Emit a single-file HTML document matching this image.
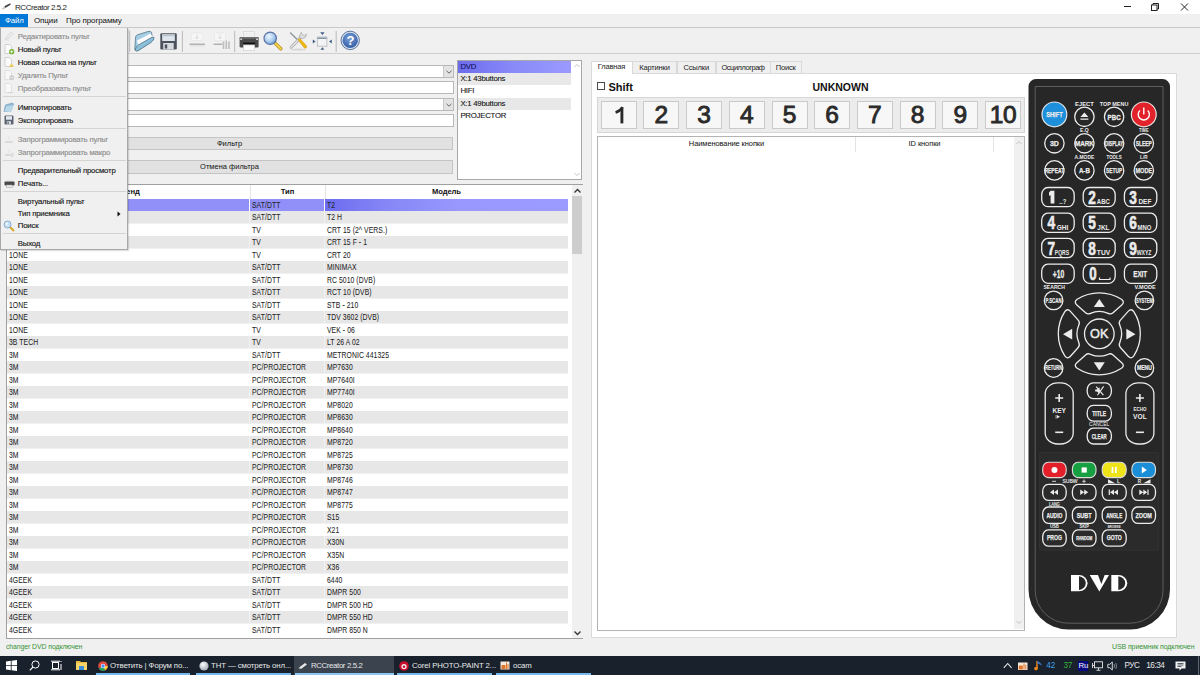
<!DOCTYPE html>
<html><head><meta charset="utf-8">
<style>
*{margin:0;padding:0;box-sizing:border-box}
html,body{width:1200px;height:675px;overflow:hidden}
body{white-space:nowrap;background:#f0f0f0;font-family:"Liberation Sans",sans-serif;position:relative;font-size:7.5px;color:#000}
.a{position:absolute}
i{font-style:normal}
/* title */
#title{left:0;top:0;width:1200px;height:14px;background:#fff}
#title .t{left:15px;top:2.6px;font-size:8px;color:#222;letter-spacing:-0.45px}
#menubar{left:0;top:14px;width:1200px;height:13.8px;background:#f0f0f0;border-bottom:1px solid #c9c9c9}
#menubar .m{top:2.1px;font-size:8px;color:#111;letter-spacing:-0.1px}
#filehl{left:0;top:14px;width:28px;height:13px;background:#0078d7}
#toolbar{left:0;top:27px;width:1200px;height:27px;border-bottom:1px solid #cfcfcf}
/* form */
.inp{background:#fff;border:1px solid #b9b9b9}
.btn{background:#e1e1e1;border:1px solid #c4c4c4;text-align:center;font-size:7.5px;color:#111;line-height:12.5px}
.ddb{background:#e3e3e3;border-left:1px solid #c8c8c8}
/* list */
#list{left:457px;top:60px;width:125px;height:120px;background:#fff;border:1px solid #a8a8a8}
#list .li{left:0;width:113px;height:12.2px;font-size:7.8px;padding-left:2.4px;line-height:12px;color:#111;letter-spacing:-0.25px;-webkit-text-stroke:0.1px #111}
/* table */
#table{left:6px;top:183.5px;width:577px;height:455px;background:#fff;border:1px solid #a0a0a0}
.row{position:absolute;left:7px;width:561px;height:12.5px;font-size:8.5px;color:#222;letter-spacing:0.1px}
.row i{position:absolute;top:0;height:12px;line-height:10px;padding-top:1.0px;padding-left:1.9px;white-space:nowrap}
.row b{display:inline-block;font-weight:normal;transform:scaleX(.8);transform-origin:0 50%;-webkit-text-stroke:0.05px #222}
.row .c1{left:0;width:242px}
.row .c2{left:243px;width:74px}
.row .c3{left:318px;width:243px}
.row.g{background:#f1f1f1}.row.g i{background:#e7e7e7}
.row.sel i{background:#9090f8}
.row.sel .c3{background:linear-gradient(90deg,#6c6cf0,#8686f6 25%,#9898fe 55%,#9a9aff)}
.hdr{top:0;height:14px;line-height:14px;font-weight:bold;font-size:7.6px;text-align:center;color:#111;letter-spacing:-0.1px}
/* tabs */
.tab{top:61px;height:12px;border:1px solid #d9d9d9;border-bottom:none;background:#f0f0f0;font-size:7.5px;line-height:12px;text-align:center;color:#222;letter-spacing:-0.15px}
#tabpage{left:590.5px;top:72.5px;width:586px;height:565px;background:#fff;border:1px solid #dadada}
.nb{top:100.5px;width:36px;height:28px;background:#f7f7f7;border:1.5px solid #cacaca;font-size:24.5px;line-height:25.8px;text-align:center;color:#2a2a2a;-webkit-text-stroke:0.9px #2a2a2a}
/* status + taskbar */
#status1{left:5.8px;top:642px;font-size:7.5px;color:#379437;letter-spacing:-0.1px;transform:scaleX(.92);transform-origin:0 0}
#status2{left:1112px;top:642px;font-size:7.5px;color:#379437;letter-spacing:-0.1px;transform:scaleX(.93);transform-origin:0 0}
#taskbar{left:0;top:656px;width:1200px;height:19px;background:#18212c}
.task{top:0;height:19px;color:#e8e8e8;font-size:7.8px;line-height:19px;letter-spacing:-0.1px}
.uline{top:17px;height:2px;background:#78b8ec}
</style></head><body>

<!-- title bar -->
<div id="title" class="a">
  <svg class="a" style="left:0;top:0" width="14" height="14" viewBox="0 0 14 14"><path d="M4.2 6.2 L9.6 3.6 Q11.2 3.4 10.6 4.8 L5.4 8 Z" fill="#4a4a4a"/><path d="M4.2 6.2 L5.4 8 L3.2 9.6 Q1.8 9.8 2.2 8.6Z" fill="#c4c4c4"/></svg>
  <div class="a t">RCCreator 2.5.2</div>
  <div class="a" style="left:1124px;top:6px;width:7px;height:1px;background:#222"></div>
  <svg class="a" style="left:1151px;top:3px" width="9" height="8" viewBox="0 0 9 8"><rect x="0.5" y="2" width="5.5" height="5.5" fill="none" stroke="#222" stroke-width="1"/><path d="M2 2 V0.5 H7.5 V6 H6" fill="none" stroke="#222" stroke-width="1"/></svg>
  <svg class="a" style="left:1180px;top:2.5px" width="9" height="8" viewBox="0 0 9 8"><path d="M1 0.5 L8 7.5 M8 0.5 L1 7.5" stroke="#222" stroke-width="1"/></svg>
</div>

<!-- menubar -->
<div id="menubar" class="a">
  <div class="a m" style="left:34px">Опции</div>
  <div class="a m" style="left:66px">Про программу</div>
</div>
<div id="filehl" class="a"><div class="a" style="left:5px;top:2.1px;font-size:7.8px;color:#fff;letter-spacing:-0.1px">Файл</div></div>

<!-- toolbar -->
<div id="toolbar" class="a"><svg class="a" style="left:0;top:0" width="400" height="27" viewBox="0 27 400 27">
<defs>
<linearGradient id="fold" x1="0" y1="0" x2="1" y2="1"><stop offset="0" stop-color="#a9d5ea"/><stop offset="1" stop-color="#6fa9c8"/></linearGradient>
<radialGradient id="lens" cx="0.4" cy="0.35" r="0.7"><stop offset="0" stop-color="#eef6fd"/><stop offset="0.6" stop-color="#a9cdf0"/><stop offset="1" stop-color="#5d92d0"/></radialGradient>
<radialGradient id="help" cx="0.45" cy="0.35" r="0.7"><stop offset="0" stop-color="#7a9fd8"/><stop offset="1" stop-color="#2f5aa3"/></radialGradient>
</defs>
<path d="M129.7 31 V52" stroke="#b9b9b9" stroke-width="1"/>
<path d="M182.4 31 V52" stroke="#b9b9b9" stroke-width="1"/>
<path d="M234.7 31 V52" stroke="#b9b9b9" stroke-width="1"/>
<path d="M336.2 31 V52" stroke="#b9b9b9" stroke-width="1"/>
<!-- folder -->
<path d="M134.8 49.6 L135.6 37 Q135.9 35.3 137.5 34.8 L148 31.5 Q151 30.8 151.6 32.5 L152 36 Z" fill="#a3cde2" stroke="#56778c" stroke-width="0.8"/>
<path d="M137 40.5 L150.6 33.6 L152.6 37 L138.3 45.4 Z" fill="#fdfdfd"/>
<path d="M135.3 50.4 Q135 49 136.5 47 L138 45.3 Q138.8 44.6 140.2 44 L152 37.2 Q154.6 36.5 154 38.8 L152.5 41 Q151.2 42.6 149.5 43.4 L139 50.2 Q136 52 135.3 50.4Z" fill="url(#fold)" stroke="#4c6f85" stroke-width="0.8"/>
<!-- floppy -->
<rect x="160.3" y="33.2" width="16.5" height="16.2" rx="1.2" fill="#4c535c"/>
<rect x="162.2" y="34.2" width="12.6" height="6.8" fill="#dfe6ee"/>
<rect x="162.2" y="34.2" width="12.6" height="2" fill="#b9c2cc"/>
<rect x="163.2" y="43" width="10.5" height="6.4" fill="#d7dbe0"/>
<rect x="164.8" y="44.5" width="2.4" height="4" fill="#4c535c"/>
<!-- disabled 1 -->
<rect x="191.5" y="33" width="11" height="7.5" rx="1" fill="#f6f6f6" stroke="#e6e6e6" stroke-width="0.7"/>
<path d="M197 34.5 V38.5 M195.5 37 L197 38.7 L198.5 37" fill="none" stroke="#cfcfcf" stroke-width="0.7"/>
<path d="M189.5 44.2 H205" stroke="#9b9b9b" stroke-width="1.1"/>
<path d="M190 46 H204.5" stroke="#e4e4e4" stroke-width="1.5"/>
<!-- disabled 2 -->
<rect x="214.5" y="33" width="11" height="7.5" rx="1" fill="#f6f6f6" stroke="#e6e6e6" stroke-width="0.7"/>
<path d="M220 34.5 V38.5 M218.5 37 L220 38.7 L221.5 37" fill="none" stroke="#cfcfcf" stroke-width="0.7"/>
<path d="M213.6 44.2 H222.5" stroke="#9b9b9b" stroke-width="1.1"/>
<path d="M223.5 41.5 V49 M226.3 40.5 V49 M229 41.5 V49" stroke="#bdbdbd" stroke-width="1.6"/>
<!-- printer -->
<rect x="243.6" y="31.4" width="11" height="6.5" fill="#f6f6f6" stroke="#cfcfcf" stroke-width="0.6"/>
<path d="M244.5 33.5 H253.5 M244.5 35.5 H253.5" stroke="#dcdcdc" stroke-width="0.5"/>
<rect x="239.6" y="37.2" width="19" height="10.2" rx="1.2" fill="#4a4a4a"/>
<rect x="239.6" y="37.2" width="19" height="1.6" fill="#6e6e6e"/>
<rect x="240.2" y="38.6" width="2" height="1.4" fill="#cfcfcf"/>
<rect x="256" y="38.6" width="2" height="1.4" fill="#cfcfcf"/>
<rect x="243" y="42.6" width="12.2" height="1.4" fill="#0e0e0e"/>
<rect x="243.6" y="45" width="11" height="5.4" fill="#fbfbfb" stroke="#cacaca" stroke-width="0.6"/>
<!-- magnifier -->
<path d="M275.6 43.6 L280.8 48.8" stroke="#b08a1a" stroke-width="3.4" stroke-linecap="round"/>
<path d="M275.6 43.6 L280.8 48.8" stroke="#f3d34a" stroke-width="2" stroke-linecap="round"/>
<circle cx="270.2" cy="38.3" r="6.2" fill="url(#lens)" stroke="#5d72a0" stroke-width="1.2"/>
<!-- tools -->
<ellipse cx="298.5" cy="49.6" rx="8" ry="1" fill="#d6d6d6"/>
<path d="M290.6 33 L298.5 40.8" stroke="#8f9aa0" stroke-width="1.5" stroke-linecap="round"/>
<path d="M291.2 47.2 L300.8 37.4" stroke="#a9a9a9" stroke-width="3" stroke-linecap="round"/>
<path d="M291.2 47.2 L300.8 37.4" stroke="#e2e2e2" stroke-width="1.6" stroke-linecap="round"/>
<path d="M300.2 38.2 Q298.6 34.2 301.4 32.2 L302.2 34.6 L304.6 35.6 L306.4 34 Q306.6 37.8 303 38.6 Z" fill="#dedede" stroke="#a2a2a2" stroke-width="0.6"/>
<path d="M298 39.8 L299.8 38.6 L306.6 46 Q306.8 48.4 304.6 48.2 Z" fill="#f0b90f" stroke="#c98f00" stroke-width="0.5"/>
<!-- fit -->
<rect x="317.3" y="37" width="9.6" height="9.2" fill="#f3f3f3" stroke="#b4b8be" stroke-width="0.8"/>
<rect x="317.6" y="37.6" width="9" height="1.2" fill="#6c7f99"/>
<path d="M320.2 32.2 H324.6 L322.4 35Z M320.4 49.8 H324.4 L322.4 47.2Z M312.8 39.4 V43.6 L315.6 41.5Z M331.8 39.4 V43.6 L329 41.5Z" fill="#435f87"/>
<!-- help -->
<circle cx="350.2" cy="40.4" r="9.2" fill="#d8e3f0" stroke="#4e6890" stroke-width="0.9"/>
<circle cx="350.2" cy="40.4" r="7.7" fill="url(#help)"/>
<text x="350.4" y="45.2" font-family="Liberation Sans" font-weight="bold" font-size="13" fill="#fff" text-anchor="middle">?</text>
</svg>
</div>

<!-- left form -->
<div class="a inp" style="left:60px;top:65px;width:394px;height:13px"><div class="a ddb" style="right:0;top:0;width:10px;height:11px"><svg class="a" style="left:2px;top:3.5px" width="6" height="4" viewBox="0 0 6 4"><path d="M0.5 0.8 L3 3.2 L5.5 0.8" fill="none" stroke="#555" stroke-width="0.9"/></svg></div></div>
<div class="a inp" style="left:60px;top:81px;width:394px;height:13px"></div>
<div class="a inp" style="left:60px;top:98px;width:394px;height:13px"><div class="a ddb" style="right:0;top:0;width:10px;height:11px"><svg class="a" style="left:2px;top:3.5px" width="6" height="4" viewBox="0 0 6 4"><path d="M0.5 0.8 L3 3.2 L5.5 0.8" fill="none" stroke="#555" stroke-width="0.9"/></svg></div></div>
<div class="a inp" style="left:60px;top:114px;width:394px;height:13px"></div>
<div class="a btn" style="left:6px;top:136.5px;width:447px;height:13px">Фильтр</div>
<div class="a btn" style="left:6px;top:160px;width:447px;height:13.5px">Отмена фильтра</div>

<!-- list -->
<div id="list" class="a">
  <div class="a li" style="top:0;background:linear-gradient(90deg,#6c6cee,#8a8af8 50%,#9a9aff);color:#101060">DVD</div>
  <div class="a li" style="top:12.2px;background:#e8e8e8">X:1 43buttons</div>
  <div class="a li" style="top:24.4px">HIFI</div>
  <div class="a li" style="top:36.6px;background:#e8e8e8">X:1 49buttons</div>
  <div class="a li" style="top:48.8px">PROJECTOR</div>
  <svg class="a" style="left:115px;top:2px" width="8" height="6" viewBox="0 0 8 6"><path d="M1.5 4 L4 1.5 L6.5 4" fill="none" stroke="#bdbdbd" stroke-width="0.9"/></svg>
  <svg class="a" style="left:115px;top:110px" width="8" height="6" viewBox="0 0 8 6"><path d="M1.5 2 L4 4.5 L6.5 2" fill="none" stroke="#bdbdbd" stroke-width="0.9"/></svg>
</div>

<!-- table -->
<div id="table" class="a">
  <div class="a hdr" style="left:0;width:242px">Бренд</div>
  <div class="a" style="left:242.5px;top:0;width:1px;height:14px;background:#e5e5e5"></div>
  <div class="a hdr" style="left:243px;width:75px">Тип</div>
  <div class="a" style="left:317.5px;top:0;width:1px;height:14px;background:#e5e5e5"></div>
  <div class="a hdr" style="left:318px;width:243px">Модель</div>
    <!-- scrollbar -->
  <div class="a" style="left:565px;top:0;width:11px;height:453px;background:#f0f0f0"></div>
  <div class="a" style="left:565px;top:11.5px;width:10px;height:58px;background:#cdcdcd"></div>
  <svg class="a" style="left:566px;top:3px" width="9" height="6" viewBox="0 0 9 6"><path d="M1.5 4.5 L4.5 1.5 L7.5 4.5" fill="none" stroke="#333" stroke-width="1.3"/></svg>
  <svg class="a" style="left:566px;top:445px" width="9" height="6" viewBox="0 0 9 6"><path d="M1.5 1.5 L4.5 4.5 L7.5 1.5" fill="none" stroke="#333" stroke-width="1.3"/></svg>
</div>

<div class="row sel" style="top:198.5px"><i class="c1"><b></b></i><i class="c2"><b>SAT/DTT</b></i><i class="c3"><b>T2</b></i></div>
<div class="row g" style="top:211.0px"><i class="c1"><b></b></i><i class="c2"><b>SAT/DTT</b></i><i class="c3"><b>T2 H</b></i></div>
<div class="row w" style="top:223.5px"><i class="c1"><b></b></i><i class="c2"><b>TV</b></i><i class="c3"><b>CRT 15 (2^ VERS.)</b></i></div>
<div class="row g" style="top:236.0px"><i class="c1"><b></b></i><i class="c2"><b>TV</b></i><i class="c3"><b>CRT 15 F - 1</b></i></div>
<div class="row w" style="top:248.5px"><i class="c1"><b>1ONE</b></i><i class="c2"><b>TV</b></i><i class="c3"><b>CRT 20</b></i></div>
<div class="row g" style="top:261.0px"><i class="c1"><b>1ONE</b></i><i class="c2"><b>SAT/DTT</b></i><i class="c3"><b>MINIMAX</b></i></div>
<div class="row w" style="top:273.5px"><i class="c1"><b>1ONE</b></i><i class="c2"><b>SAT/DTT</b></i><i class="c3"><b>RC 5010 (DVB)</b></i></div>
<div class="row g" style="top:286.0px"><i class="c1"><b>1ONE</b></i><i class="c2"><b>SAT/DTT</b></i><i class="c3"><b>RCT 10 (DVB)</b></i></div>
<div class="row w" style="top:298.5px"><i class="c1"><b>1ONE</b></i><i class="c2"><b>SAT/DTT</b></i><i class="c3"><b>STB - 210</b></i></div>
<div class="row g" style="top:311.0px"><i class="c1"><b>1ONE</b></i><i class="c2"><b>SAT/DTT</b></i><i class="c3"><b>TDV 3602 (DVB)</b></i></div>
<div class="row w" style="top:323.5px"><i class="c1"><b>1ONE</b></i><i class="c2"><b>TV</b></i><i class="c3"><b>VEK - 06</b></i></div>
<div class="row g" style="top:336.0px"><i class="c1"><b>3B TECH</b></i><i class="c2"><b>TV</b></i><i class="c3"><b>LT 26 A 02</b></i></div>
<div class="row w" style="top:348.5px"><i class="c1"><b>3M</b></i><i class="c2"><b>SAT/DTT</b></i><i class="c3"><b>METRONIC 441325</b></i></div>
<div class="row g" style="top:361.0px"><i class="c1"><b>3M</b></i><i class="c2"><b>PC/PROJECTOR</b></i><i class="c3"><b>MP7630</b></i></div>
<div class="row w" style="top:373.5px"><i class="c1"><b>3M</b></i><i class="c2"><b>PC/PROJECTOR</b></i><i class="c3"><b>MP7640I</b></i></div>
<div class="row g" style="top:386.0px"><i class="c1"><b>3M</b></i><i class="c2"><b>PC/PROJECTOR</b></i><i class="c3"><b>MP7740I</b></i></div>
<div class="row w" style="top:398.5px"><i class="c1"><b>3M</b></i><i class="c2"><b>PC/PROJECTOR</b></i><i class="c3"><b>MP8020</b></i></div>
<div class="row g" style="top:411.0px"><i class="c1"><b>3M</b></i><i class="c2"><b>PC/PROJECTOR</b></i><i class="c3"><b>MP8630</b></i></div>
<div class="row w" style="top:423.5px"><i class="c1"><b>3M</b></i><i class="c2"><b>PC/PROJECTOR</b></i><i class="c3"><b>MP8640</b></i></div>
<div class="row g" style="top:436.0px"><i class="c1"><b>3M</b></i><i class="c2"><b>PC/PROJECTOR</b></i><i class="c3"><b>MP8720</b></i></div>
<div class="row w" style="top:448.5px"><i class="c1"><b>3M</b></i><i class="c2"><b>PC/PROJECTOR</b></i><i class="c3"><b>MP8725</b></i></div>
<div class="row g" style="top:461.0px"><i class="c1"><b>3M</b></i><i class="c2"><b>PC/PROJECTOR</b></i><i class="c3"><b>MP8730</b></i></div>
<div class="row w" style="top:473.5px"><i class="c1"><b>3M</b></i><i class="c2"><b>PC/PROJECTOR</b></i><i class="c3"><b>MP8746</b></i></div>
<div class="row g" style="top:486.0px"><i class="c1"><b>3M</b></i><i class="c2"><b>PC/PROJECTOR</b></i><i class="c3"><b>MP8747</b></i></div>
<div class="row w" style="top:498.5px"><i class="c1"><b>3M</b></i><i class="c2"><b>PC/PROJECTOR</b></i><i class="c3"><b>MP8775</b></i></div>
<div class="row g" style="top:511.0px"><i class="c1"><b>3M</b></i><i class="c2"><b>PC/PROJECTOR</b></i><i class="c3"><b>S15</b></i></div>
<div class="row w" style="top:523.5px"><i class="c1"><b>3M</b></i><i class="c2"><b>PC/PROJECTOR</b></i><i class="c3"><b>X21</b></i></div>
<div class="row g" style="top:536.0px"><i class="c1"><b>3M</b></i><i class="c2"><b>PC/PROJECTOR</b></i><i class="c3"><b>X30N</b></i></div>
<div class="row w" style="top:548.5px"><i class="c1"><b>3M</b></i><i class="c2"><b>PC/PROJECTOR</b></i><i class="c3"><b>X35N</b></i></div>
<div class="row g" style="top:561.0px"><i class="c1"><b>3M</b></i><i class="c2"><b>PC/PROJECTOR</b></i><i class="c3"><b>X36</b></i></div>
<div class="row w" style="top:573.5px"><i class="c1"><b>4GEEK</b></i><i class="c2"><b>SAT/DTT</b></i><i class="c3"><b>6440</b></i></div>
<div class="row g" style="top:586.0px"><i class="c1"><b>4GEEK</b></i><i class="c2"><b>SAT/DTT</b></i><i class="c3"><b>DMPR 500</b></i></div>
<div class="row w" style="top:598.5px"><i class="c1"><b>4GEEK</b></i><i class="c2"><b>SAT/DTT</b></i><i class="c3"><b>DMPR 500 HD</b></i></div>
<div class="row g" style="top:611.0px"><i class="c1"><b>4GEEK</b></i><i class="c2"><b>SAT/DTT</b></i><i class="c3"><b>DMPR 550 HD</b></i></div>
<div class="row w" style="top:623.5px"><i class="c1"><b>4GEEK</b></i><i class="c2"><b>SAT/DTT</b></i><i class="c3"><b>DMPR 850 N</b></i></div>

<!-- tabs -->
<div id="tabpage" class="a"></div>
<div class="a tab" style="left:632px;width:45px">Картинки</div>
<div class="a tab" style="left:676.5px;width:39.5px">Ссылки</div>
<div class="a tab" style="left:715.5px;width:55px;letter-spacing:-0.48px">Осциллограф</div>
<div class="a tab" style="left:770px;width:31.5px">Поиск</div>
<div class="a tab" style="left:590.5px;top:60.5px;height:13.5px;width:42px;background:#fff;border-color:#d9d9d9;line-height:10.6px">Главная</div>

<!-- shift / unknown -->
<div class="a" style="left:597px;top:82px;width:8.3px;height:8.3px;border:1px solid #4a4a4a;background:#fff"></div>
<div class="a" style="left:608.5px;top:80.5px;font-size:11px;font-weight:bold;color:#111">Shift</div>
<div class="a" style="left:800px;top:81px;width:81px;text-align:center;font-size:10.5px;font-weight:bold;color:#111">UNKNOWN</div>

<!-- number panel -->
<div class="a" style="left:597px;top:97px;width:428px;height:35.5px;background:#ececec;border:1.5px solid #d6d6d6"></div>
<div class="a nb" style="left:600.7px"><svg class="a" style="left:0;top:0" width="33" height="25" viewBox="0 0 33 25"><path d="M19.9 5.6 V21.4" stroke="#2a2a2a" stroke-width="2.9"/><path d="M20.6 5.2 Q18.5 9 13.6 10.6" fill="none" stroke="#2a2a2a" stroke-width="2.6"/></svg></div>
<div class="a nb" style="left:643.4px">2</div>
<div class="a nb" style="left:686.1px">3</div>
<div class="a nb" style="left:728.8px">4</div>
<div class="a nb" style="left:771.5px">5</div>
<div class="a nb" style="left:814.2px">6</div>
<div class="a nb" style="left:856.9px">7</div>
<div class="a nb" style="left:899.6px">8</div>
<div class="a nb" style="left:942.3px">9</div>
<div class="a nb" style="left:985px;letter-spacing:-0.5px">10</div>

<!-- ID grid -->
<div class="a" style="left:597px;top:136px;width:428px;height:494.5px;background:#fff;border:1px solid #b4b4b4">
  <div class="a" style="left:0;top:0;width:257px;height:13px;line-height:14px;text-align:center;font-size:7.5px;color:#111;letter-spacing:-0.1px">Наименование кнопки</div>
  <div class="a" style="left:257px;top:0;width:1px;height:14.5px;background:#e4e4e4"></div>
  <div class="a" style="left:258px;top:0;width:137px;height:13px;line-height:14px;text-align:center;font-size:7.5px;color:#111;letter-spacing:-0.1px">ID кнопки</div>
  <div class="a" style="left:394.5px;top:0;width:1px;height:14.5px;background:#e4e4e4"></div>
  <div class="a" style="left:416px;top:0;width:10px;height:492px;background:#f0f0f0"></div>
  <svg class="a" style="left:416.5px;top:3px" width="8" height="6" viewBox="0 0 8 6"><path d="M1.5 4 L4 1.5 L6.5 4" fill="none" stroke="#bbb" stroke-width="0.9"/></svg>
  <svg class="a" style="left:417px;top:482px" width="8" height="6" viewBox="0 0 8 6"><path d="M1.5 2 L4 4.5 L6.5 2" fill="none" stroke="#bbb" stroke-width="0.9"/></svg>
</div>

<!-- remote -->
<svg class="a" style="left:1020px;top:70px" width="160" height="570" viewBox="1020 70 160 570"><g font-family="Liberation Sans, sans-serif"><path d="M1036.0 79 H1162.5 A7.5 7.5 0 0 1 1170 86.5 V589.5 A40 40 0 0 1 1130 629.5 H1068.5 A40 40 0 0 1 1028.5 589.5 V86.5 A7.5 7.5 0 0 1 1036.0 79Z" fill="#272727"/>
<path d="M1035.2 86.5 H1163 V590.2 A33 33 0 0 1 1130 623.2 H1068.2 A33 33 0 0 1 1035.2 590.2 Z" fill="none" stroke="#5e5e5e" stroke-width="1"/>
<circle cx="1054.4" cy="114.4" r="12.4" fill="#1d8fdb" stroke="#e6e6e6" stroke-width="1.2"/>
<text x="1054.4" y="117.0" font-size="7" font-weight="bold" fill="#ececec" text-anchor="middle" textLength="16.5" lengthAdjust="spacingAndGlyphs" stroke="#ececec" stroke-width="0.25">SHIFT</text>
<circle cx="1084.4" cy="116.8" r="9.7" fill="none" stroke="#ececec" stroke-width="1.3"/>
<path d="M1080.4 117 L1084.4 112.6 L1088.4 117Z M1080.4 118.4 H1088.4 V119.8 H1080.4Z" fill="#ececec"/>
<circle cx="1114.1" cy="116.8" r="9.7" fill="none" stroke="#ececec" stroke-width="1.3"/>
<text x="1114.1" y="119.6" font-size="7.2" font-weight="bold" fill="#ececec" text-anchor="middle" textLength="13" lengthAdjust="spacingAndGlyphs" stroke="#ececec" stroke-width="0.3">PBC</text>
<circle cx="1143.8" cy="114.4" r="12.4" fill="#e2222a" stroke="#e6e6e6" stroke-width="1.2"/>
<path d="M1139.8999999999999 110.4 A5.6 5.6 0 1 0 1147.7 110.4" fill="none" stroke="#fff" stroke-width="1.4"/>
<path d="M1143.8 107.5 V114.5" stroke="#fff" stroke-width="1.4"/>
<text x="1084.4" y="105.6" font-size="5.2" font-weight="bold" fill="#ececec" text-anchor="middle" textLength="18.8" lengthAdjust="spacingAndGlyphs">EJECT</text>
<text x="1114.1" y="105.6" font-size="5.2" font-weight="bold" fill="#ececec" text-anchor="middle" textLength="28.5" lengthAdjust="spacingAndGlyphs">TOP MENU</text>
<circle cx="1054.4" cy="143.3" r="9.7" fill="none" stroke="#ececec" stroke-width="1.3"/>
<text x="1054.4" y="145.9" font-size="7" font-weight="bold" fill="#ececec" text-anchor="middle" textLength="9" lengthAdjust="spacingAndGlyphs" stroke="#ececec" stroke-width="0.25">3D</text>
<circle cx="1084.4" cy="143.3" r="9.7" fill="none" stroke="#ececec" stroke-width="1.3"/>
<text x="1084.4" y="145.9" font-size="7" font-weight="bold" fill="#ececec" text-anchor="middle" textLength="19" lengthAdjust="spacingAndGlyphs" stroke="#ececec" stroke-width="0.25">MARK</text>
<circle cx="1114.1" cy="143.3" r="9.7" fill="none" stroke="#ececec" stroke-width="1.3"/>
<text x="1114.1" y="145.9" font-size="7" font-weight="bold" fill="#ececec" text-anchor="middle" textLength="18" lengthAdjust="spacingAndGlyphs" stroke="#ececec" stroke-width="0.25">DISPLAY</text>
<circle cx="1143.8" cy="143.3" r="9.7" fill="none" stroke="#ececec" stroke-width="1.3"/>
<text x="1143.8" y="145.9" font-size="7" font-weight="bold" fill="#ececec" text-anchor="middle" textLength="16" lengthAdjust="spacingAndGlyphs" stroke="#ececec" stroke-width="0.25">SLEEP</text>
<text x="1084.4" y="132" font-size="4.8" font-weight="bold" fill="#ececec" text-anchor="middle" textLength="8.6" lengthAdjust="spacingAndGlyphs">E.Q</text>
<text x="1143.8" y="132" font-size="4.8" font-weight="bold" fill="#ececec" text-anchor="middle" textLength="9.6" lengthAdjust="spacingAndGlyphs">TIME</text>
<circle cx="1054.4" cy="170.4" r="9.7" fill="none" stroke="#ececec" stroke-width="1.3"/>
<text x="1054.4" y="173.0" font-size="7" font-weight="bold" fill="#ececec" text-anchor="middle" textLength="20" lengthAdjust="spacingAndGlyphs" stroke="#ececec" stroke-width="0.25">REPEAT</text>
<circle cx="1084.4" cy="170.4" r="9.7" fill="none" stroke="#ececec" stroke-width="1.3"/>
<text x="1084.4" y="173.0" font-size="7" font-weight="bold" fill="#ececec" text-anchor="middle" textLength="11" lengthAdjust="spacingAndGlyphs" stroke="#ececec" stroke-width="0.25">A-B</text>
<circle cx="1114.1" cy="170.4" r="9.7" fill="none" stroke="#ececec" stroke-width="1.3"/>
<text x="1114.1" y="173.0" font-size="7" font-weight="bold" fill="#ececec" text-anchor="middle" textLength="16" lengthAdjust="spacingAndGlyphs" stroke="#ececec" stroke-width="0.25">SETUP</text>
<circle cx="1143.8" cy="170.4" r="9.7" fill="none" stroke="#ececec" stroke-width="1.3"/>
<text x="1143.8" y="173.0" font-size="7" font-weight="bold" fill="#ececec" text-anchor="middle" textLength="16.7" lengthAdjust="spacingAndGlyphs" stroke="#ececec" stroke-width="0.25">MODE</text>
<text x="1084.4" y="159" font-size="4.8" font-weight="bold" fill="#ececec" text-anchor="middle" textLength="19.6" lengthAdjust="spacingAndGlyphs">A.MODE</text>
<text x="1114.1" y="159" font-size="4.8" font-weight="bold" fill="#ececec" text-anchor="middle" textLength="15.2" lengthAdjust="spacingAndGlyphs">TOOLS</text>
<text x="1143.8" y="159" font-size="4.8" font-weight="bold" fill="#ececec" text-anchor="middle" textLength="7.4" lengthAdjust="spacingAndGlyphs">L/R</text>
<rect x="1041.7" y="187.5" width="32.5" height="19.19999999999999" rx="6.2" ry="7.2" fill="none" stroke="#ececec" stroke-width="1.3"/>
<rect x="1083.2" y="187.5" width="32.0" height="19.19999999999999" rx="6.2" ry="7.2" fill="none" stroke="#ececec" stroke-width="1.3"/>
<rect x="1124.4" y="187.5" width="32.399999999999864" height="19.19999999999999" rx="6.2" ry="7.2" fill="none" stroke="#ececec" stroke-width="1.3"/>
<rect x="1041.7" y="213.1" width="32.5" height="19.19999999999999" rx="6.2" ry="7.2" fill="none" stroke="#ececec" stroke-width="1.3"/>
<rect x="1083.2" y="213.1" width="32.0" height="19.19999999999999" rx="6.2" ry="7.2" fill="none" stroke="#ececec" stroke-width="1.3"/>
<rect x="1124.4" y="213.1" width="32.399999999999864" height="19.19999999999999" rx="6.2" ry="7.2" fill="none" stroke="#ececec" stroke-width="1.3"/>
<rect x="1041.7" y="238.4" width="32.5" height="19.200000000000017" rx="6.2" ry="7.2" fill="none" stroke="#ececec" stroke-width="1.3"/>
<rect x="1083.2" y="238.4" width="32.0" height="19.200000000000017" rx="6.2" ry="7.2" fill="none" stroke="#ececec" stroke-width="1.3"/>
<rect x="1124.4" y="238.4" width="32.399999999999864" height="19.200000000000017" rx="6.2" ry="7.2" fill="none" stroke="#ececec" stroke-width="1.3"/>
<rect x="1041.7" y="264.09999999999997" width="32.5" height="19.200000000000045" rx="6.2" ry="7.2" fill="none" stroke="#ececec" stroke-width="1.3"/>
<rect x="1083.2" y="264.09999999999997" width="32.0" height="19.200000000000045" rx="6.2" ry="7.2" fill="none" stroke="#ececec" stroke-width="1.3"/>
<rect x="1124.4" y="264.09999999999997" width="32.399999999999864" height="19.200000000000045" rx="6.2" ry="7.2" fill="none" stroke="#ececec" stroke-width="1.3"/>
<path d="M1050.6 190.8 H1054.4 V203.6 H1050.6 V195.2 L1049 195.8 V192.6 Z" fill="#ececec"/>
<text x="1059.3" y="204.0" font-size="6.3" font-weight="bold" fill="#ececec" text-anchor="start" textLength="7" lengthAdjust="spacingAndGlyphs">..?</text>
<text x="1092.1000000000001" y="203.6" font-size="17.5" font-weight="bold" fill="#ececec" text-anchor="middle" textLength="7.6" lengthAdjust="spacingAndGlyphs" stroke="#ececec" stroke-width="0.6">2</text>
<text x="1096.8" y="204.0" font-size="6.3" font-weight="bold" fill="#ececec" text-anchor="start" textLength="13" lengthAdjust="spacingAndGlyphs">ABC</text>
<text x="1133.0" y="203.6" font-size="17.5" font-weight="bold" fill="#ececec" text-anchor="middle" textLength="7.6" lengthAdjust="spacingAndGlyphs" stroke="#ececec" stroke-width="0.6">3</text>
<text x="1138.4" y="204.0" font-size="6.3" font-weight="bold" fill="#ececec" text-anchor="start" textLength="13" lengthAdjust="spacingAndGlyphs">DEF</text>
<text x="1051.3" y="229.2" font-size="17.5" font-weight="bold" fill="#ececec" text-anchor="middle" textLength="7.6" lengthAdjust="spacingAndGlyphs" stroke="#ececec" stroke-width="0.6">4</text>
<text x="1056.7" y="229.6" font-size="6.3" font-weight="bold" fill="#ececec" text-anchor="start" textLength="11.7" lengthAdjust="spacingAndGlyphs">GHI</text>
<text x="1092.1000000000001" y="229.2" font-size="17.5" font-weight="bold" fill="#ececec" text-anchor="middle" textLength="7.6" lengthAdjust="spacingAndGlyphs" stroke="#ececec" stroke-width="0.6">5</text>
<text x="1097.3" y="229.6" font-size="6.3" font-weight="bold" fill="#ececec" text-anchor="start" textLength="12.2" lengthAdjust="spacingAndGlyphs">JKL</text>
<text x="1133.0" y="229.2" font-size="17.5" font-weight="bold" fill="#ececec" text-anchor="middle" textLength="7.6" lengthAdjust="spacingAndGlyphs" stroke="#ececec" stroke-width="0.6">6</text>
<text x="1137.6000000000001" y="229.6" font-size="6.3" font-weight="bold" fill="#ececec" text-anchor="start" textLength="13.8" lengthAdjust="spacingAndGlyphs">MNO</text>
<text x="1051.3" y="254.5" font-size="17.5" font-weight="bold" fill="#ececec" text-anchor="middle" textLength="7.6" lengthAdjust="spacingAndGlyphs" stroke="#ececec" stroke-width="0.6">7</text>
<text x="1054.8" y="254.9" font-size="6.3" font-weight="bold" fill="#ececec" text-anchor="start" textLength="14.3" lengthAdjust="spacingAndGlyphs">PQRS</text>
<text x="1092.1000000000001" y="254.5" font-size="17.5" font-weight="bold" fill="#ececec" text-anchor="middle" textLength="7.6" lengthAdjust="spacingAndGlyphs" stroke="#ececec" stroke-width="0.6">8</text>
<text x="1096.8" y="254.9" font-size="6.3" font-weight="bold" fill="#ececec" text-anchor="start" textLength="13.4" lengthAdjust="spacingAndGlyphs">TUV</text>
<text x="1133.0" y="254.5" font-size="17.5" font-weight="bold" fill="#ececec" text-anchor="middle" textLength="7.6" lengthAdjust="spacingAndGlyphs" stroke="#ececec" stroke-width="0.6">9</text>
<text x="1136.7" y="254.9" font-size="6.3" font-weight="bold" fill="#ececec" text-anchor="start" textLength="14.7" lengthAdjust="spacingAndGlyphs">WXYZ</text>
<text x="1058.5" y="277.59999999999997" font-size="10" font-weight="bold" fill="#ececec" text-anchor="middle" textLength="11.4" lengthAdjust="spacingAndGlyphs" stroke="#ececec" stroke-width="0.3">+10</text>
<text x="1093" y="279.9" font-size="17.5" font-weight="bold" fill="#ececec" text-anchor="middle" textLength="7.4" lengthAdjust="spacingAndGlyphs" stroke="#ececec" stroke-width="0.6">0</text>
<path d="M1099.5 277.5 V279.5 H1110 V277.5" fill="none" stroke="#ececec" stroke-width="1.2"/>
<text x="1140.2" y="277.09999999999997" font-size="8.5" font-weight="bold" fill="#ececec" text-anchor="middle" textLength="14" lengthAdjust="spacingAndGlyphs" stroke="#ececec" stroke-width="0.25">EXIT</text>
<text x="1054.2" y="289.2" font-size="5" font-weight="bold" fill="#ececec" text-anchor="middle" textLength="21.6" lengthAdjust="spacingAndGlyphs">SEARCH</text>
<text x="1145" y="289.2" font-size="5" font-weight="bold" fill="#ececec" text-anchor="middle" textLength="21.2" lengthAdjust="spacingAndGlyphs">V.MODE</text>
<circle cx="1053.6" cy="300.4" r="9.3" fill="none" stroke="#ececec" stroke-width="1.3"/>
<text x="1053.6" y="302.7" font-size="6.4" font-weight="bold" fill="#ececec" text-anchor="middle" textLength="16" lengthAdjust="spacingAndGlyphs" stroke="#ececec" stroke-width="0.2">P.SCAN</text>
<circle cx="1144.4" cy="300.4" r="9.3" fill="none" stroke="#ececec" stroke-width="1.3"/>
<text x="1144.4" y="302.7" font-size="6.4" font-weight="bold" fill="#ececec" text-anchor="middle" textLength="17" lengthAdjust="spacingAndGlyphs" stroke="#ececec" stroke-width="0.2">SYSTEM</text>
<circle cx="1053.6" cy="368" r="9.3" fill="none" stroke="#ececec" stroke-width="1.3"/>
<text x="1053.6" y="370.3" font-size="6.4" font-weight="bold" fill="#ececec" text-anchor="middle" textLength="17" lengthAdjust="spacingAndGlyphs" stroke="#ececec" stroke-width="0.2">RETURN</text>
<circle cx="1144.4" cy="368" r="9.3" fill="none" stroke="#ececec" stroke-width="1.3"/>
<text x="1144.4" y="370.3" font-size="6.4" font-weight="bold" fill="#ececec" text-anchor="middle" textLength="15" lengthAdjust="spacingAndGlyphs" stroke="#ececec" stroke-width="0.2">MENU</text>
<path d="M1076.86 304.93 Q1073.50 301.94 1077.14 299.30 A41.0 41.0 0 0 1 1121.46 299.30 Q1125.10 301.94 1121.74 304.93 L1113.03 312.69 Q1110.79 314.69 1108.12 313.32 A22.3 22.3 0 0 0 1090.48 313.32 Q1087.81 314.69 1085.57 312.69 Z" fill="none" stroke="#ececec" stroke-width="1.3"/>
<path d="M1128.17 311.36 Q1131.16 308.00 1133.80 311.64 A41.0 41.0 0 0 1 1133.80 355.96 Q1131.16 359.60 1128.17 356.24 L1120.41 347.53 Q1118.41 345.29 1119.78 342.62 A22.3 22.3 0 0 0 1119.78 324.98 Q1118.41 322.31 1120.41 320.07 Z" fill="none" stroke="#ececec" stroke-width="1.3"/>
<path d="M1121.74 362.67 Q1125.10 365.66 1121.46 368.30 A41.0 41.0 0 0 1 1077.14 368.30 Q1073.50 365.66 1076.86 362.67 L1085.57 354.91 Q1087.81 352.91 1090.48 354.28 A22.3 22.3 0 0 0 1108.12 354.28 Q1110.79 352.91 1113.03 354.91 Z" fill="none" stroke="#ececec" stroke-width="1.3"/>
<path d="M1070.43 356.24 Q1067.44 359.60 1064.80 355.96 A41.0 41.0 0 0 1 1064.80 311.64 Q1067.44 308.00 1070.43 311.36 L1078.19 320.07 Q1080.19 322.31 1078.82 324.98 A22.3 22.3 0 0 0 1078.82 342.62 Q1080.19 345.29 1078.19 347.53 Z" fill="none" stroke="#ececec" stroke-width="1.3"/>
<circle cx="1099.3" cy="333.8" r="14.8" fill="none" stroke="#ececec" stroke-width="1.3"/>
<text x="1099.3" y="338.2" font-size="12.5" font-weight="normal" fill="#ececec" text-anchor="middle" textLength="18.4" lengthAdjust="spacingAndGlyphs" stroke="#ececec" stroke-width="0.45">OK</text>
<path d="M1093.8 307 L1099.3 299 L1104.8 307Z" fill="#ececec"/>
<path d="M1093.8 362.2 L1099.3 370.4 L1104.8 362.2Z" fill="#ececec"/>
<path d="M1072.2 328.8 L1063 334.2 L1072.2 339.6Z" fill="#ececec"/>
<path d="M1126.3 328.8 L1135.5 334.2 L1126.3 339.6Z" fill="#ececec"/>
<rect x="1045.2" y="382.9" width="28.0" height="61.10000000000002" rx="12.5" ry="11" fill="none" stroke="#ececec" stroke-width="1.3"/>
<rect x="1125.9" y="382.9" width="28.0" height="61.10000000000002" rx="12.5" ry="11" fill="none" stroke="#ececec" stroke-width="1.3"/>
<path d="M1055.2 398 H1063.2 M1059.2 394 V402" stroke="#ececec" stroke-width="1.6"/>
<path d="M1055.2 432.3 H1063.2" stroke="#ececec" stroke-width="1.6"/>
<path d="M1135.9 398 H1143.9 M1139.9 394 V402" stroke="#ececec" stroke-width="1.6"/>
<path d="M1135.9 432.3 H1143.9" stroke="#ececec" stroke-width="1.6"/>
<text x="1059.2" y="413.3" font-size="7" font-weight="bold" fill="#ececec" text-anchor="middle" textLength="13.5" lengthAdjust="spacingAndGlyphs">KEY</text>
<path d="M1056.8 415 V418.6 L1060 416.8Z" fill="#ececec"/><path d="M1056 415 V418.6" stroke="#ececec" stroke-width="0.6"/>
<text x="1139.9" y="411.4" font-size="4.6" font-weight="bold" fill="#ececec" text-anchor="middle" textLength="13" lengthAdjust="spacingAndGlyphs">ECHO</text>
<text x="1139.9" y="418.5" font-size="8" font-weight="bold" fill="#ececec" text-anchor="middle" textLength="13.6" lengthAdjust="spacingAndGlyphs">VOL</text>
<rect x="1087.2" y="382.8" width="24.200000000000045" height="15.800000000000011" rx="6" ry="7" fill="none" stroke="#ececec" stroke-width="1.3"/>
<rect x="1087.2" y="405.4" width="24.200000000000045" height="15.800000000000011" rx="6" ry="7" fill="none" stroke="#ececec" stroke-width="1.3"/>
<rect x="1087.2" y="428.2" width="24.200000000000045" height="15.800000000000011" rx="6" ry="7" fill="none" stroke="#ececec" stroke-width="1.3"/>
<path d="M1095.2 389.4 H1096.9 L1099.6 387.2 V393.8 L1096.9 391.6 H1095.2Z" fill="#ececec"/><path d="M1096.2 386.6 L1103.4 395.2 M1103.6 386.4 L1097.4 395.2" stroke="#ececec" stroke-width="1.1"/>
<text x="1099.2" y="415.6" font-size="7" font-weight="bold" fill="#ececec" text-anchor="middle" textLength="14" lengthAdjust="spacingAndGlyphs" stroke="#ececec" stroke-width="0.25">TITLE</text>
<text x="1099.2" y="426.4" font-size="5" font-weight="normal" fill="#ececec" text-anchor="middle" textLength="20.2" lengthAdjust="spacingAndGlyphs">CANCEL</text>
<text x="1099.2" y="438.5" font-size="7" font-weight="bold" fill="#ececec" text-anchor="middle" textLength="15" lengthAdjust="spacingAndGlyphs" stroke="#ececec" stroke-width="0.25">CLEAR</text>
<rect x="1039.5" y="452.4" width="119.2" height="97.8" rx="2" fill="#2b2b2b" stroke="#353535" stroke-width="0.8"/>
<rect x="1042.7" y="462.3" width="23.5" height="15.300000000000011" rx="5.5" ry="6.5" fill="#e3202a" stroke="#dcdcdc" stroke-width="1.1"/>
<rect x="1072.4" y="462.3" width="23.59999999999991" height="15.300000000000011" rx="5.5" ry="6.5" fill="#16a042" stroke="#dcdcdc" stroke-width="1.1"/>
<rect x="1102.2" y="462.3" width="24.0" height="15.300000000000011" rx="5.5" ry="6.5" fill="#efe31a" stroke="#dcdcdc" stroke-width="1.1"/>
<rect x="1131.9" y="462.3" width="23.59999999999991" height="15.300000000000011" rx="5.5" ry="6.5" fill="#1a8fd8" stroke="#dcdcdc" stroke-width="1.1"/>
<circle cx="1054.45" cy="470" r="3" fill="#fff"/>
<rect x="1081.6" y="467.4" width="5.2" height="5.2" fill="#fff"/>
<rect x="1111.6" y="467" width="1.7" height="6" fill="#fff"/><rect x="1115" y="467" width="1.7" height="6" fill="#fff"/>
<path d="M1141.8 466.5 L1146.8 470 L1141.8 473.5Z" fill="#fff"/>
<path d="M1052.2 481.3 H1056" stroke="#ececec" stroke-width="0.9"/>
<text x="1070" y="483.4" font-size="5.2" font-weight="normal" fill="#ececec" text-anchor="middle" textLength="15" lengthAdjust="spacingAndGlyphs" stroke="#ececec" stroke-width="0.15">SUBW</text>
<path d="M1082.2 481.3 H1085.8 M1084 479.5 V483.1" stroke="#ececec" stroke-width="0.8"/>
<path d="M1108 483.3 L1115.2 483.3 L1108 479.3Z" fill="#ececec"/>
<text x="1118.5" y="483.4" font-size="5.2" font-weight="bold" fill="#ececec" text-anchor="middle" textLength="3" lengthAdjust="spacingAndGlyphs">L</text>
<text x="1139.5" y="483.4" font-size="5.2" font-weight="bold" fill="#ececec" text-anchor="middle" textLength="3.4" lengthAdjust="spacingAndGlyphs">R</text>
<path d="M1143.3 483.3 L1150.5 483.3 L1150.5 479.3Z" fill="#ececec"/>
<rect x="1042.7" y="484.3" width="23.5" height="16.099999999999966" rx="5.5" ry="6.8" fill="none" stroke="#ececec" stroke-width="1.3"/>
<rect x="1072.4" y="484.3" width="23.59999999999991" height="16.099999999999966" rx="5.5" ry="6.8" fill="none" stroke="#ececec" stroke-width="1.3"/>
<rect x="1102.2" y="484.3" width="24.0" height="16.099999999999966" rx="5.5" ry="6.8" fill="none" stroke="#ececec" stroke-width="1.3"/>
<rect x="1131.9" y="484.3" width="23.59999999999991" height="16.099999999999966" rx="5.5" ry="6.8" fill="none" stroke="#ececec" stroke-width="1.3"/>
<path d="M1050 492.3 L1054 489.5 V495.1Z M1054 492.3 L1058 489.5 V495.1Z" fill="#ececec"/>
<path d="M1084.2 492.3 L1080.2 489.5 V495.1Z M1088.2 492.3 L1084.2 489.5 V495.1Z" fill="#ececec"/>
<path d="M1109.3 489.5 V495.1" stroke="#ececec" stroke-width="1.2"/><path d="M1110 492.3 L1114 489.5 V495.1Z M1114 492.3 L1118 489.5 V495.1Z" fill="#ececec"/>
<path d="M1143.3 492.3 L1139.3 489.5 V495.1Z M1147.3 492.3 L1143.3 489.5 V495.1Z" fill="#ececec"/><path d="M1148 489.5 V495.1" stroke="#ececec" stroke-width="1.2"/>
<rect x="1042.7" y="507" width="23.5" height="16.299999999999955" rx="5.5" ry="6.8" fill="none" stroke="#ececec" stroke-width="1.3"/>
<text x="1054.45" y="517.5" font-size="7" font-weight="bold" fill="#ececec" text-anchor="middle" textLength="16" lengthAdjust="spacingAndGlyphs" stroke="#ececec" stroke-width="0.25">AUDIO</text>
<rect x="1072.4" y="507" width="23.59999999999991" height="16.299999999999955" rx="5.5" ry="6.8" fill="none" stroke="#ececec" stroke-width="1.3"/>
<text x="1084.2" y="517.5" font-size="7" font-weight="bold" fill="#ececec" text-anchor="middle" textLength="15" lengthAdjust="spacingAndGlyphs" stroke="#ececec" stroke-width="0.25">SUBT</text>
<rect x="1102.2" y="507" width="24.0" height="16.299999999999955" rx="5.5" ry="6.8" fill="none" stroke="#ececec" stroke-width="1.3"/>
<text x="1114.2" y="517.5" font-size="7" font-weight="bold" fill="#ececec" text-anchor="middle" textLength="16" lengthAdjust="spacingAndGlyphs" stroke="#ececec" stroke-width="0.25">ANGLE</text>
<rect x="1131.9" y="507" width="23.59999999999991" height="16.299999999999955" rx="5.5" ry="6.8" fill="none" stroke="#ececec" stroke-width="1.3"/>
<text x="1143.7" y="517.5" font-size="7" font-weight="bold" fill="#ececec" text-anchor="middle" textLength="16.5" lengthAdjust="spacingAndGlyphs" stroke="#ececec" stroke-width="0.25">ZOOM</text>
<text x="1054.4" y="505.6" font-size="4.8" font-weight="bold" fill="#ececec" text-anchor="middle" textLength="11" lengthAdjust="spacingAndGlyphs">LANG</text>
<rect x="1042.7" y="529.9" width="23.5" height="16.300000000000068" rx="5.5" ry="6.8" fill="none" stroke="#ececec" stroke-width="1.3"/>
<text x="1054.45" y="540.4" font-size="7" font-weight="bold" fill="#ececec" text-anchor="middle" textLength="15" lengthAdjust="spacingAndGlyphs" stroke="#ececec" stroke-width="0.25">PROG</text>
<rect x="1072.4" y="529.9" width="23.59999999999991" height="16.300000000000068" rx="5.5" ry="6.8" fill="none" stroke="#ececec" stroke-width="1.3"/>
<text x="1084.2" y="540.4" font-size="5.6" font-weight="bold" fill="#ececec" text-anchor="middle" textLength="16" lengthAdjust="spacingAndGlyphs" stroke="#ececec" stroke-width="0.25">RANDOM</text>
<rect x="1102.2" y="529.9" width="24.0" height="16.300000000000068" rx="5.5" ry="6.8" fill="none" stroke="#ececec" stroke-width="1.3"/>
<text x="1114.2" y="540.4" font-size="7" font-weight="bold" fill="#ececec" text-anchor="middle" textLength="15" lengthAdjust="spacingAndGlyphs" stroke="#ececec" stroke-width="0.25">GOTO</text>
<text x="1054.4" y="528.2" font-size="4.8" font-weight="bold" fill="#ececec" text-anchor="middle" textLength="9" lengthAdjust="spacingAndGlyphs">USB</text>
<text x="1084.2" y="528.2" font-size="4.8" font-weight="bold" fill="#ececec" text-anchor="middle" textLength="9.5" lengthAdjust="spacingAndGlyphs">SKIP</text>
<text x="1114.2" y="528.2" font-size="4.4" font-weight="bold" fill="#ececec" text-anchor="middle" textLength="13" lengthAdjust="spacingAndGlyphs">BROWSE</text>
<path d="M1071 575 H1079 A8.6 8.15 0 0 1 1079 591.3 H1071Z" fill="#fff"/>
<path d="M1079 576.2 A7.6 7 0 0 1 1079 590.1 Z" fill="#272727"/>
<path d="M1089.7 575 H1098 L1101.3 584 L1104.7 575 H1109 L1099.3 591.6Z" fill="#fff"/>
<path d="M1111.3 575 H1118.5 A8.8 8.15 0 0 1 1118.5 591.3 H1111.3Z" fill="#fff"/>
<path d="M1118.3 576.2 A7.8 7 0 0 1 1118.3 590.1 Z" fill="#272727"/></g></svg>

<!-- menu dropdown -->
<div class="a" style="left:0;top:28px;width:128px;height:222px;background:#f0f0f0;border:1px solid #a8a8a8;border-top:none;box-shadow:1px 1px 1px rgba(0,0,0,0.12)"></div>
<div class="a" style="left:3px;top:96.2px;width:123px;height:1px;background:#d4d4d4"></div>
<div class="a" style="left:3px;top:128.2px;width:123px;height:1px;background:#d4d4d4"></div>
<div class="a" style="left:3px;top:159.8px;width:123px;height:1px;background:#d4d4d4"></div>
<div class="a" style="left:3px;top:191.1px;width:123px;height:1px;background:#d4d4d4"></div>
<div class="a" style="left:3px;top:232.9px;width:123px;height:1px;background:#d4d4d4"></div>
<div class="a" style="left:17.8px;top:31.70px;font-size:7.8px;line-height:10px;color:#8e8e8e;letter-spacing:-0.2px;-webkit-text-stroke:0.15px #8e8e8e">Редактировать пульт</div>
<svg class="a" style="left:4px;top:31px" width="10" height="10" viewBox="0 0 10 10"><path d="M1.5 8.5 L2.2 6.2 L7.5 1 L9 2.5 L3.8 7.8Z" fill="none" stroke="#d0d0d0" stroke-width="0.9"/><path d="M1 9 H5" stroke="#dcdcdc" stroke-width="0.7"/></svg>
<div class="a" style="left:17.8px;top:44.70px;font-size:7.8px;line-height:10px;color:#1a1a1a;letter-spacing:-0.2px;-webkit-text-stroke:0.15px #1a1a1a">Новый пульт</div>
<svg class="a" style="left:3.5px;top:44px" width="11" height="11" viewBox="0 0 11 11"><path d="M1 0.5 H5.5 L7.5 2.5 V9.5 H1Z" fill="#fafafa" stroke="#c8c8c8" stroke-width="0.8"/><circle cx="7.7" cy="7.7" r="2.6" fill="#73b12e"/><path d="M6.3 7.7 H9.1 M7.7 6.3 V9.1" stroke="#fff" stroke-width="0.9"/></svg>
<div class="a" style="left:17.8px;top:58.00px;font-size:7.8px;line-height:10px;color:#1a1a1a;letter-spacing:-0.2px;-webkit-text-stroke:0.15px #1a1a1a">Новая ссылка на пульт</div>
<svg class="a" style="left:3.5px;top:57px" width="11" height="11" viewBox="0 0 11 11"><path d="M1 0.5 H5.5 L7.5 2.5 V9.5 H1Z" fill="#fafafa" stroke="#c8c8c8" stroke-width="0.8"/><path d="M5 9.8 L7.5 6.5 L10 9.8Z" fill="#e9c64a"/></svg>
<div class="a" style="left:17.8px;top:70.70px;font-size:7.8px;line-height:10px;color:#8e8e8e;letter-spacing:-0.2px;-webkit-text-stroke:0.15px #8e8e8e">Удалить Пульт</div>
<svg class="a" style="left:3.5px;top:70px" width="11" height="11" viewBox="0 0 11 11"><path d="M1 0.5 H5.5 L7.5 2.5 V9.5 H1Z" fill="#f8f8f8" stroke="#dadada" stroke-width="0.8"/><circle cx="7.7" cy="7.7" r="2.4" fill="#c9c9c9"/><path d="M6.4 7.7 H9" stroke="#f4f4f4" stroke-width="0.9"/></svg>
<div class="a" style="left:17.8px;top:83.70px;font-size:7.8px;line-height:10px;color:#8e8e8e;letter-spacing:-0.2px;-webkit-text-stroke:0.15px #8e8e8e">Преобразовать пульт</div>
<svg class="a" style="left:3.5px;top:83px" width="11" height="11" viewBox="0 0 11 11"><path d="M1 0.5 H5.5 L7.5 2.5 V9.5 H1Z" fill="#f8f8f8" stroke="#dcdcdc" stroke-width="0.8"/><path d="M4 9.5 H9" stroke="#cfcfcf" stroke-width="0.8"/></svg>
<div class="a" style="left:17.8px;top:103.00px;font-size:7.8px;line-height:10px;color:#1a1a1a;letter-spacing:-0.2px;-webkit-text-stroke:0.15px #1a1a1a">Импортировать</div>
<svg class="a" style="left:3px;top:102px" width="11" height="10" viewBox="0 0 11 10"><path d="M1 9.5 L2.5 3 L9.5 1 L10.5 2 L8 9Z" fill="#8fbcd8" stroke="#6f96b2" stroke-width="0.6"/><path d="M1.5 9.5 L3.5 4 L10.5 3.2 L8.5 9.5Z" fill="#b8d8ea"/></svg>
<div class="a" style="left:17.8px;top:116.30px;font-size:7.8px;line-height:10px;color:#1a1a1a;letter-spacing:-0.2px;-webkit-text-stroke:0.15px #1a1a1a">Экспортировать</div>
<svg class="a" style="left:3.5px;top:115px" width="10" height="10" viewBox="0 0 10 10"><rect x="0.5" y="0.5" width="9" height="9" rx="1" fill="#5b6470"/><rect x="2" y="1.2" width="6" height="3.5" fill="#e4e8ee"/><rect x="2.8" y="6.2" width="4.2" height="3.3" fill="#d6dbe2"/><rect x="3.5" y="6.8" width="1.2" height="2.2" fill="#5b6470"/></svg>
<div class="a" style="left:17.8px;top:135.30px;font-size:7.8px;line-height:10px;color:#8e8e8e;letter-spacing:-0.2px;-webkit-text-stroke:0.15px #8e8e8e">Запрограммировать пульт</div>
<svg class="a" style="left:3.5px;top:135px" width="11" height="10" viewBox="0 0 11 10"><path d="M5 1 V5" stroke="#e0e0e0" stroke-width="0.9"/><path d="M1 7 H9" stroke="#cfcfcf" stroke-width="1.3"/></svg>
<div class="a" style="left:17.8px;top:148.10px;font-size:7.8px;line-height:10px;color:#8e8e8e;letter-spacing:-0.2px;-webkit-text-stroke:0.15px #8e8e8e">Запрограммировать макро</div>
<svg class="a" style="left:3.5px;top:148px" width="11" height="10" viewBox="0 0 11 10"><path d="M5 1 V5" stroke="#e0e0e0" stroke-width="0.9"/><path d="M1 7 H7" stroke="#cfcfcf" stroke-width="1.3"/><path d="M7.5 5 V9 M9 4.5 V9" stroke="#d6d6d6" stroke-width="0.9"/></svg>
<div class="a" style="left:17.8px;top:166.00px;font-size:7.8px;line-height:10px;color:#1a1a1a;letter-spacing:-0.2px;-webkit-text-stroke:0.15px #1a1a1a">Предварительный просмотр</div>
<div class="a" style="left:17.8px;top:179.10px;font-size:7.8px;line-height:10px;color:#1a1a1a;letter-spacing:-0.2px;-webkit-text-stroke:0.15px #1a1a1a">Печать...</div>
<svg class="a" style="left:3.5px;top:179px" width="11" height="9" viewBox="0 0 11 9"><rect x="2.5" y="0.5" width="6" height="2" fill="#e9e9e9"/><rect x="0.5" y="2.5" width="10" height="4" rx="0.8" fill="#4a4a4a"/><rect x="2.5" y="6" width="6" height="2.5" fill="#ececec" stroke="#9a9a9a" stroke-width="0.5"/></svg>
<div class="a" style="left:17.8px;top:197.20px;font-size:7.8px;line-height:10px;color:#1a1a1a;letter-spacing:-0.2px;-webkit-text-stroke:0.15px #1a1a1a">Виртуальный пульт</div>
<div class="a" style="left:17.8px;top:209.40px;font-size:7.8px;line-height:10px;color:#1a1a1a;letter-spacing:-0.2px;-webkit-text-stroke:0.15px #1a1a1a">Тип приемника</div>
<div class="a" style="left:17.8px;top:221.20px;font-size:7.8px;line-height:10px;color:#1a1a1a;letter-spacing:-0.2px;-webkit-text-stroke:0.15px #1a1a1a">Поиск</div>
<svg class="a" style="left:2.5px;top:220px" width="12" height="12" viewBox="0 0 12 12"><path d="M6.5 6.5 L10.5 10.5" stroke="#d9a520" stroke-width="1.8" stroke-linecap="round"/><circle cx="4.5" cy="4.5" r="3.5" fill="#c9e1f4" stroke="#7fa6c8" stroke-width="0.9"/><circle cx="3.8" cy="3.6" r="1.2" fill="#fff" opacity="0.8"/></svg>
<div class="a" style="left:17.8px;top:239.30px;font-size:7.8px;line-height:10px;color:#1a1a1a;letter-spacing:-0.2px;-webkit-text-stroke:0.15px #1a1a1a">Выход</div>
<svg class="a" style="left:116.5px;top:210.5px" width="4" height="6" viewBox="0 0 4 6"><path d="M0.5 0.5 L3.5 3 L0.5 5.5Z" fill="#111"/></svg>

<!-- status -->
<div id="status1" class="a">changer DVD подключен</div>
<div id="status2" class="a">USB приемник подключен</div>

<!-- taskbar -->
<div id="taskbar" class="a">
  <svg class="a" style="left:6px;top:4px" width="11" height="11" viewBox="0 0 11 11"><path d="M0 1.5 L4.8 0.8 V5.2 H0Z M5.6 0.7 L11 0 V5.2 H5.6Z M0 5.9 H4.8 V10.2 L0 9.5Z M5.6 5.9 H11 V11 L5.6 10.3Z" fill="#fff"/></svg>
  <svg class="a" style="left:29px;top:4px" width="11" height="11" viewBox="0 0 11 11"><circle cx="6.5" cy="4.5" r="3.6" fill="none" stroke="#fff" stroke-width="1"/><path d="M4 7 L0.8 10.3" stroke="#fff" stroke-width="1.1"/></svg>
  <svg class="a" style="left:51px;top:4px" width="11" height="11" viewBox="0 0 11 11"><rect x="1.5" y="2.5" width="6" height="6" fill="none" stroke="#fff" stroke-width="1"/><path d="M0 1.2 H9 M0 9.8 H9 M10 1 V2 M10 4 V10" stroke="#fff" stroke-width="1"/></svg>
  <svg class="a" style="left:76px;top:4px" width="11" height="10" viewBox="0 0 11 10"><path d="M0 1 H4 L5 2 H11 V10 H0Z" fill="#e8b83a"/><path d="M0 3 H11 V10 H0Z" fill="#f7d46a"/><path d="M3 6 H8 V10 H3Z" fill="#3c8fd6"/></svg>
  <div class="a" style="left:294px;top:0;width:100px;height:19px;background:#3a434e"></div>
<div class="a uline" style="left:95.5px;width:94px"></div>
<div class="a uline" style="left:196px;width:95px"></div>
<div class="a uline" style="left:294.5px;width:99.5px;background:#8cc6f2"></div>
<div class="a uline" style="left:397px;width:95px"></div>
<div class="a uline" style="left:496px;width:95px"></div>
<svg class="a" style="left:97.5px;top:4.5px" width="10" height="10" viewBox="0 0 10 10"><circle cx="5" cy="5" r="4.8" fill="#dd4b3e"/><path d="M5 5 L0.9 7.4 A4.8 4.8 0 0 0 7.4 9.2Z" fill="#1fa463"/><path d="M5 5 L7.4 9.2 A4.8 4.8 0 0 0 9.8 5 H5Z" fill="#ffcd40"/><circle cx="5" cy="5" r="2.2" fill="#fff"/><circle cx="5" cy="5" r="1.7" fill="#4c8bf5"/></svg>
<div class="a task" style="left:110px">Ответить | Форум по...</div>
<svg class="a" style="left:199px;top:4.5px" width="10" height="10" viewBox="0 0 10 10"><defs><radialGradient id="sph" cx="0.4" cy="0.35" r="0.7"><stop offset="0" stop-color="#ffffff"/><stop offset="1" stop-color="#9aa3ad"/></radialGradient></defs><circle cx="5" cy="5" r="4.6" fill="url(#sph)"/></svg>
<div class="a task" style="left:211px">ТНТ — смотреть онл...</div>
<svg class="a" style="left:298px;top:5px" width="10" height="9" viewBox="0 0 10 9"><path d="M1 6.5 L7 2 L9 3.5 L3 8Z" fill="#e6e6e6"/><path d="M1 6.5 L3 8 L1.5 8.3 L0.5 7.3Z" fill="#9a9a9a"/></svg>
<div class="a task" style="left:311px;letter-spacing:-0.35px">RCCreator 2.5.2</div>
<svg class="a" style="left:399px;top:4.5px" width="10" height="10" viewBox="0 0 10 10"><circle cx="5" cy="5" r="4.8" fill="#c8102e"/><circle cx="5" cy="5.5" r="2.6" fill="#f3f3f3"/><circle cx="5" cy="5.8" r="1.3" fill="#c8102e"/></svg>
<div class="a task" style="left:412px">Corel PHOTO-PAINT 2...</div>
<svg class="a" style="left:500px;top:5px" width="10" height="9" viewBox="0 0 10 9"><rect x="0.5" y="0.5" width="9" height="8" fill="#f4e9dc"/><path d="M1.5 4 H5.5 V8 H1.5Z" fill="#e0742a"/><path d="M6.5 1.5 V8 M8 3 V8" stroke="#e0742a" stroke-width="1"/></svg>
<div class="a task" style="left:513px">ocam</div>
<!-- tray -->
<svg class="a" style="left:1003px;top:6px" width="10" height="7" viewBox="0 0 10 7"><path d="M0.8 5.8 L4.7 1.5 L8.6 5.8" fill="none" stroke="#e6e6e6" stroke-width="1.1"/></svg>
<svg class="a" style="left:1018px;top:6px" width="10" height="8" viewBox="0 0 10 8"><rect x="0" y="0.5" width="9.5" height="7.5" fill="#f4e9dc"/><path d="M0.8 3.5 H4.8 V7.5 H0.8Z" fill="#e0742a"/><path d="M6 1.5 V7.5 M7.8 2.8 V7.5" stroke="#e0742a" stroke-width="1"/></svg>
<svg class="a" style="left:1033.5px;top:4px" width="9" height="11" viewBox="0 0 9 11"><path d="M3 1 V8.5" stroke="#f08a1c" stroke-width="1.4"/><circle cx="2" cy="8.6" r="1.8" fill="#f08a1c"/><path d="M3 1 Q7 2 8 6 Q6.5 4 3.5 3.5" fill="#3a76c8"/></svg>
<div class="a task" style="left:1046.3px;color:#3ea0e8;font-size:8.2px">42</div>
<div class="a task" style="left:1063.4px;color:#3cb43c;font-size:8.2px">37</div>
<div class="a" style="left:1077.9px;top:5px;width:10.3px;height:9.5px;background:#0a0a80"></div>
<div class="a task" style="left:1078.6px;color:#fff;font-size:7.8px">Ru</div>
<svg class="a" style="left:1092.4px;top:4.5px" width="11" height="10" viewBox="0 0 11 10"><rect x="2.5" y="0.8" width="8" height="6" fill="none" stroke="#e6e6e6" stroke-width="0.9"/><path d="M6.5 7 V9 M4.5 9.3 H8.5 M0.5 2 V7 M0.5 4.5 H2.5" stroke="#e6e6e6" stroke-width="0.9"/></svg>
<svg class="a" style="left:1107px;top:4.5px" width="11" height="10" viewBox="0 0 11 10"><path d="M0.8 3.3 H2.8 L5.3 1 V9 L2.8 6.7 H0.8Z" fill="none" stroke="#e6e6e6" stroke-width="0.9"/><path d="M7 3 Q8 5 7 7 M8.8 2 Q10.3 5 8.8 8" fill="none" stroke="#9aa0a6" stroke-width="0.8"/></svg>
<div class="a task" style="left:1124.6px;font-size:8.2px;letter-spacing:-0.6px">РУС</div>
<div class="a task" style="left:1146.3px;font-size:8.2px;letter-spacing:-0.5px">16:34</div>
<svg class="a" style="left:1174.5px;top:4.5px" width="11" height="11" viewBox="0 0 11 11"><path d="M0.5 0.5 H10.5 V7.5 H6.5 L4.5 9.8 V7.5 H0.5Z" fill="#f2f2f2"/><path d="M2.5 2.5 H8.5 M2.5 4 H8.5 M2.5 5.5 H6.5" stroke="#18212c" stroke-width="0.7"/></svg>
<div class="a" style="left:1197.5px;top:0;width:1px;height:19px;background:#5d6670"></div>

</div>
</body></html>
